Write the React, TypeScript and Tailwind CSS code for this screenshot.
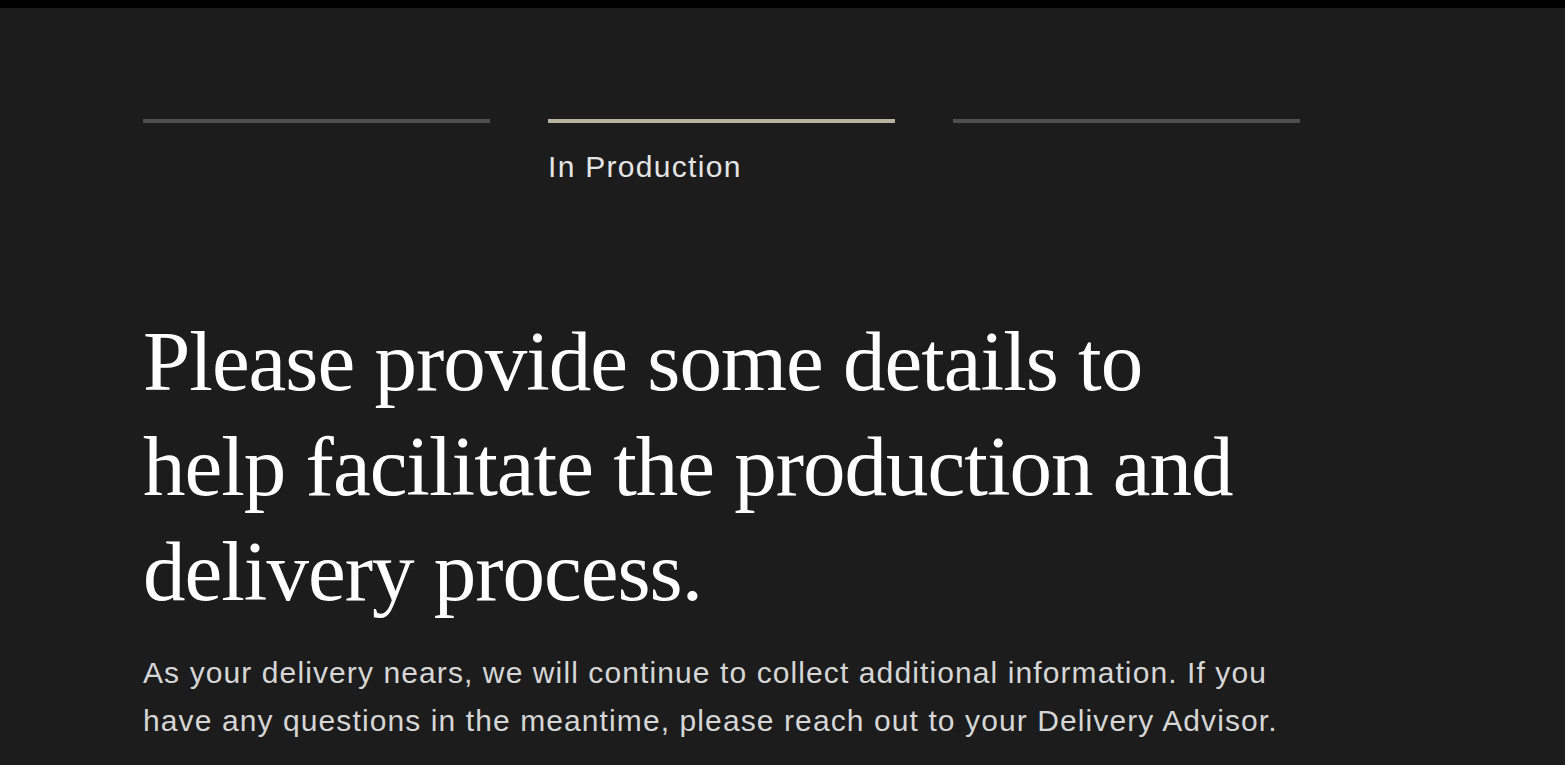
import React from "react";

const steps = [
  { label: "", active: false },
  { label: "In Production", active: true },
  { label: "", active: false },
];

const App = () => {
  return (
    <div className="min-h-screen w-full bg-[#1c1c1c] overflow-hidden">
      <div className="h-2 w-full bg-black" />
      <div className="pl-[143px] pt-[111px]">
        <div className="grid grid-cols-3 gap-[58px] w-[1157px]">
          {steps.map((s, i) => (
            <div key={i} className="flex flex-col">
              <div
                className={
                  s.active ? "h-1 w-full bg-[#b9b29f]" : "h-1 w-full bg-[#4f4f4f]"
                }
              />
              <div
                className="mt-[27px] h-[34px] text-[30px] leading-[34px] text-[#e4e4e4] tracking-[1.3px] whitespace-nowrap"
                style={{ fontFamily: '"Liberation Sans", Arial, sans-serif' }}
              >
                {s.label}
              </div>
            </div>
          ))}
        </div>

        <h1
          className="mt-[125px] w-[1125px] text-[85px] leading-[105px] text-white tracking-[-1px]"
          style={{ fontFamily: '"Liberation Serif", "Times New Roman", serif' }}
        >
          Please provide some details to help facilitate the production and delivery process.
        </h1>

        <p
          className="mt-[25px] w-[1160px] text-[30px] leading-[48px] text-[#d6d6d6] tracking-[1.1px]"
          style={{ fontFamily: '"Liberation Sans", Arial, sans-serif' }}
        >
          As your delivery nears, we will continue to collect additional information. If you
          have any questions in the meantime, please reach out to your Delivery Advisor.
        </p>
      </div>
    </div>
  );
};

export default App;
